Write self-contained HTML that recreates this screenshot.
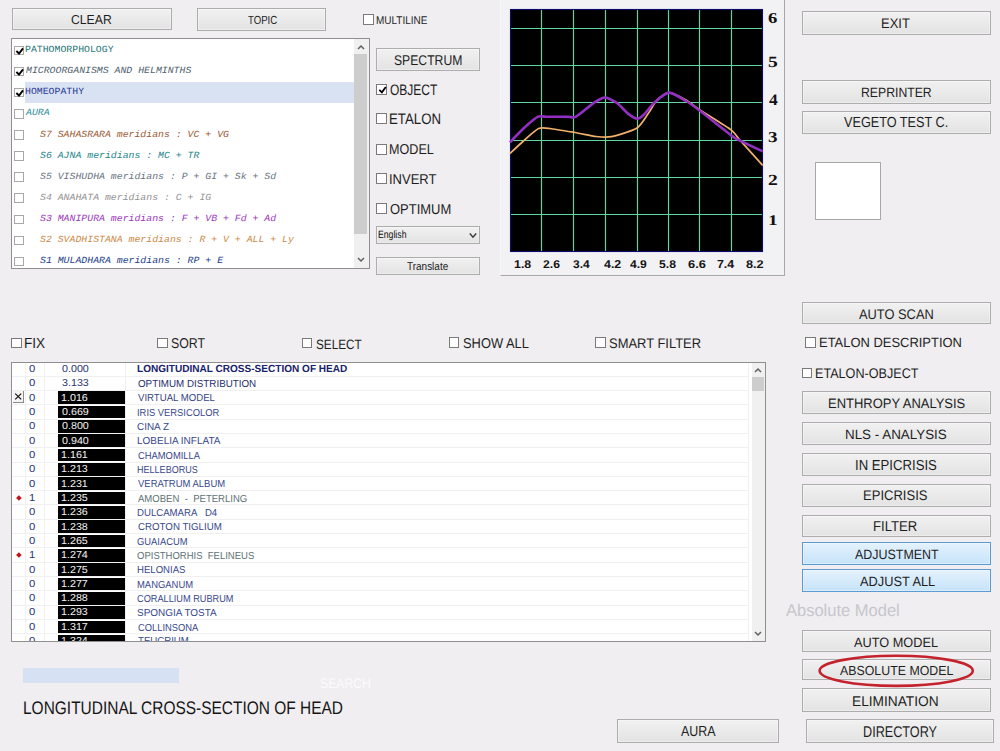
<!DOCTYPE html><html><head><meta charset="utf-8"><style>
html,body{margin:0;padding:0}
body{width:1000px;height:751px;background:#f0eef1;position:relative;overflow:hidden;font-family:"Liberation Sans",sans-serif;color:#1e1e1e;text-rendering:geometricPrecision}
.a{position:absolute;white-space:nowrap}
.t{position:absolute;white-space:nowrap;line-height:1;transform-origin:0 0}
.btn{position:absolute;box-sizing:border-box;border:1px solid #adadad;background:linear-gradient(#f1f1f1,#e3e3e3);box-shadow:inset 0 0 0 1px rgba(255,255,255,0.35)}
.btn.blue{border-color:#5b9bd2;background:linear-gradient(#e4f2fd,#c6e3f9)}
.cb{position:absolute;box-sizing:border-box;width:11px;height:11px;border:1px solid #7a7a7a;background:#fff}
</style></head><body>

<div class="btn" style="left:12px;top:8px;width:160.00px;height:22.40px;"></div>
<div class="t" style="left:71.14px;top:13.05px;font-size:13.03px;color:#1e1e1e;transform:scaleX(0.939);">CLEAR</div>
<div class="btn" style="left:197px;top:8px;width:129.00px;height:23.00px;"></div>
<div class="t" style="left:247.51px;top:14.63px;font-size:11.69px;color:#1e1e1e;transform:scaleX(0.821);">TOPIC</div>
<div class="cb" style="left:363px;top:14px;width:11.00px;height:11.00px;border-color:#7a7a7a"></div>
<div class="t" style="left:376.00px;top:15.92px;font-size:11.14px;color:#1e1e1e;transform:scaleX(0.896);">MULTILINE</div>
<div class="a" style="left:11px;top:38px;width:359px;height:231px;background:#fff"></div>
<div class="a" style="left:354px;top:39px;width:15px;height:229px;background:#f0f0f0"></div>
<div class="a" style="left:354.3px;top:54.2px;width:12.5px;height:180px;background:#cdcdcd"></div>
<svg class="a" style="left:355px;top:42px" width="12" height="10"><path d="M3 7 L6 4 L9 7" stroke="#606060" stroke-width="1.5" fill="none"/></svg>
<svg class="a" style="left:355px;top:255px" width="12" height="10"><path d="M3 3 L6 6 L9 3" stroke="#606060" stroke-width="1.5" fill="none"/></svg>
<div class="a" style="left:25px;top:82px;width:328.5px;height:20.5px;background:#d9e2f3"></div>
<div class="cb" style="left:14.3px;top:45.7px;width:9.50px;height:9.50px;border-color:#a8a8a8"><svg width="12" height="12" viewBox="0 0 12 12" style="position:absolute;left:-1px;top:-1px"><path d="M2.4 5.0 L5.0 7.5 L9.0 2.3" stroke="#000" stroke-width="1.9" fill="none"/></svg></div>
<div class="t" style="left:25.21px;top:45.15px;font-size:9.41px;color:#1f7676;font-family:'Liberation Mono';transform:scaleX(1.046);">PATHOMORPHOLOGY</div>
<div class="cb" style="left:14.3px;top:66.8px;width:9.50px;height:9.50px;border-color:#a8a8a8"><svg width="12" height="12" viewBox="0 0 12 12" style="position:absolute;left:-1px;top:-1px"><path d="M2.4 5.0 L5.0 7.5 L9.0 2.3" stroke="#000" stroke-width="1.9" fill="none"/></svg></div>
<div class="t" style="left:25.90px;top:66.25px;font-size:9.41px;color:#4f626e;font-family:'Liberation Mono';font-style:italic;transform:scaleX(1.046);">MICROORGANISMS AND HELMINTHS</div>
<div class="cb" style="left:14.3px;top:87.9px;width:9.50px;height:9.50px;border-color:#a8a8a8"><svg width="12" height="12" viewBox="0 0 12 12" style="position:absolute;left:-1px;top:-1px"><path d="M2.4 5.0 L5.0 7.5 L9.0 2.3" stroke="#000" stroke-width="1.9" fill="none"/></svg></div>
<div class="t" style="left:25.21px;top:87.35px;font-size:9.41px;color:#2a3a94;font-family:'Liberation Mono';transform:scaleX(1.046);">HOMEOPATHY</div>
<div class="cb" style="left:14.3px;top:109.00000000000001px;width:9.50px;height:9.50px;border-color:#a8a8a8"></div>
<div class="t" style="left:26.49px;top:108.45px;font-size:9.41px;color:#2f8f9a;font-family:'Liberation Mono';font-style:italic;transform:scaleX(1.046);">AURA</div>
<div class="cb" style="left:14.3px;top:130.1px;width:9.50px;height:9.50px;border-color:#a8a8a8"></div>
<div class="t" style="left:39.80px;top:129.55px;font-size:9.41px;color:#9a5a34;font-family:'Liberation Mono';font-style:italic;transform:scaleX(1.046);">S7 SAHASRARA meridians : VC + VG</div>
<div class="cb" style="left:14.3px;top:151.2px;width:9.50px;height:9.50px;border-color:#a8a8a8"></div>
<div class="t" style="left:39.80px;top:150.65px;font-size:9.41px;color:#25848c;font-family:'Liberation Mono';font-style:italic;transform:scaleX(1.046);">S6 AJNA meridians : MC + TR</div>
<div class="cb" style="left:14.3px;top:172.3px;width:9.50px;height:9.50px;border-color:#a8a8a8"></div>
<div class="t" style="left:39.80px;top:171.75px;font-size:9.41px;color:#68747f;font-family:'Liberation Mono';font-style:italic;transform:scaleX(1.046);">S5 VISHUDHA meridians : P + GI + Sk + Sd</div>
<div class="cb" style="left:14.3px;top:193.4px;width:9.50px;height:9.50px;border-color:#a8a8a8"></div>
<div class="t" style="left:39.80px;top:192.85px;font-size:9.41px;color:#939393;font-family:'Liberation Mono';font-style:italic;transform:scaleX(1.046);">S4 ANAHATA meridians : C + IG</div>
<div class="cb" style="left:14.3px;top:214.5px;width:9.50px;height:9.50px;border-color:#a8a8a8"></div>
<div class="t" style="left:39.80px;top:213.95px;font-size:9.41px;color:#9a38bc;font-family:'Liberation Mono';font-style:italic;transform:scaleX(1.046);">S3 MANIPURA meridians : F + VB + Fd + Ad</div>
<div class="cb" style="left:14.3px;top:235.6px;width:9.50px;height:9.50px;border-color:#a8a8a8"></div>
<div class="t" style="left:39.80px;top:235.05px;font-size:9.41px;color:#cc8a48;font-family:'Liberation Mono';font-style:italic;transform:scaleX(1.046);">S2 SVADHISTANA meridians : R + V + ALL + Ly</div>
<div class="cb" style="left:14.3px;top:256.7px;width:9.50px;height:9.50px;border-color:#a8a8a8"></div>
<div class="t" style="left:39.80px;top:256.15px;font-size:9.41px;color:#22428a;font-family:'Liberation Mono';font-style:italic;transform:scaleX(1.046);">S1 MULADHARA meridians : RP + E</div>
<div class="a" style="left:11px;top:38px;width:359px;height:231px;box-sizing:border-box;border:1px solid #8f8f8f"></div>
<div class="btn" style="left:376px;top:48px;width:104.00px;height:23.00px;"></div>
<div class="t" style="left:393.89px;top:52.89px;font-size:14.08px;color:#1e1e1e;transform:scaleX(0.865);">SPECTRUM</div>
<div class="cb" style="left:375.5px;top:84.25px;width:11.00px;height:11.00px;border-color:#7a7a7a"><svg width="12" height="12" viewBox="0 0 12 12" style="position:absolute;left:-1px;top:-1px"><path d="M3.3 5.9 L5.9 8.3 L9.8 3.0" stroke="#000" stroke-width="1.8" fill="none"/></svg></div>
<div class="t" style="left:389.90px;top:82.88px;font-size:15.14px;color:#1e1e1e;transform:scaleX(0.794);">OBJECT</div>
<div class="cb" style="left:375.5px;top:113.3px;width:11.00px;height:11.00px;border-color:#7a7a7a"></div>
<div class="t" style="left:389.44px;top:112.33px;font-size:15.14px;color:#1e1e1e;transform:scaleX(0.876);">ETALON</div>
<div class="cb" style="left:375.5px;top:143.8px;width:11.00px;height:11.00px;border-color:#7a7a7a"></div>
<div class="t" style="left:389.19px;top:143.45px;font-size:14.37px;color:#1e1e1e;transform:scaleX(0.878);">MODEL</div>
<div class="cb" style="left:375.5px;top:173.2px;width:11.00px;height:11.00px;border-color:#7a7a7a"></div>
<div class="t" style="left:389.03px;top:172.81px;font-size:14.20px;color:#1e1e1e;transform:scaleX(0.915);">INVERT</div>
<div class="cb" style="left:375.5px;top:203.2px;width:11.00px;height:11.00px;border-color:#7a7a7a"></div>
<div class="t" style="left:389.55px;top:203.09px;font-size:14.37px;color:#1e1e1e;transform:scaleX(0.904);">OPTIMUM</div>
<div class="btn" style="left:375.6px;top:226.2px;width:104.40px;height:17.40px;border-color:#acacac"></div>
<div class="t" style="left:378.10px;top:229.52px;font-size:10.64px;color:#111;transform:scaleX(0.817);">English</div>
<svg class="a" style="left:466px;top:229px" width="12" height="12"><path d="M3.8 4.6 L7 8.2 L10.2 4.6" stroke="#3a3a3a" stroke-width="1.45" fill="none"/></svg>
<div class="btn" style="left:376px;top:257.2px;width:104.00px;height:18.00px;"></div>
<div class="t" style="left:407.00px;top:262.04px;font-size:11.35px;color:#222;transform:scaleX(0.879);">Translate</div>
<div class="a" style="left:500px;top:-1px;width:285px;height:277px;box-sizing:border-box;border:1px solid #a8a8a8;border-left-color:#f6f6f8;border-top:none;background:#f2f1f4"></div>
<svg class="a" style="left:500px;top:0px" width="270" height="260" viewBox="500 0 270 260"><rect x="510" y="9" width="253" height="243" fill="#000"/><line x1="541.5" y1="9" x2="541.5" y2="252" stroke="#60d99c" stroke-width="1.15"/><line x1="573.5" y1="9" x2="573.5" y2="252" stroke="#60d99c" stroke-width="1.15"/><line x1="605.5" y1="9" x2="605.5" y2="252" stroke="#60d99c" stroke-width="1.15"/><line x1="637.5" y1="9" x2="637.5" y2="252" stroke="#60d99c" stroke-width="1.15"/><line x1="668.5" y1="9" x2="668.5" y2="252" stroke="#60d99c" stroke-width="1.15"/><line x1="699.5" y1="9" x2="699.5" y2="252" stroke="#60d99c" stroke-width="1.15"/><line x1="731.5" y1="9" x2="731.5" y2="252" stroke="#60d99c" stroke-width="1.15"/><line x1="510" y1="28.5" x2="763" y2="28.5" stroke="#60d99c" stroke-width="1.15"/><line x1="510" y1="65.5" x2="763" y2="65.5" stroke="#60d99c" stroke-width="1.15"/><line x1="510" y1="102.5" x2="763" y2="102.5" stroke="#60d99c" stroke-width="1.15"/><line x1="510" y1="140.5" x2="763" y2="140.5" stroke="#60d99c" stroke-width="1.15"/><line x1="510" y1="177.5" x2="763" y2="177.5" stroke="#60d99c" stroke-width="1.15"/><line x1="510" y1="214.5" x2="763" y2="214.5" stroke="#60d99c" stroke-width="1.15"/><rect x="510.5" y="9.5" width="252" height="242" stroke="#0c0c70" stroke-width="1.1" fill="none"/><path d="M510.0 153.5 C511.6 152.0 520.7 143.4 524.0 140.5 C527.3 137.6 535.6 130.0 538.6 128.6 C541.6 127.2 545.8 128.0 550.0 128.5 C554.2 129.0 569.6 131.6 575.0 132.5 C580.4 133.4 591.8 136.0 596.0 136.5 C600.2 137.0 606.7 137.7 611.4 136.7 C616.1 135.7 632.3 131.0 636.6 128.3 C640.9 125.6 645.8 116.9 648.2 113.6 C650.6 110.3 654.6 102.5 657.0 100.0 C659.4 97.5 665.6 92.6 669.0 92.6 C672.4 92.6 682.4 98.0 686.0 100.0 C689.6 102.0 694.8 106.5 700.0 110.0 C705.2 113.5 726.1 126.1 730.8 129.7 C735.5 133.3 736.9 136.7 740.6 140.9 C744.3 145.1 760.1 162.5 762.7 165.4" stroke="#f2b06a" stroke-width="1.7" fill="none"/><path d="M510.0 142.3 C511.6 140.6 520.7 131.0 524.0 128.0 C527.3 125.0 535.4 118.0 538.0 116.7 C540.6 115.4 542.5 116.7 546.0 116.7 C549.5 116.7 564.5 116.7 568.0 116.7 C571.5 116.7 572.9 118.4 576.0 116.7 C579.1 115.0 591.2 104.6 594.6 102.4 C598.0 100.2 602.4 97.4 605.0 97.5 C607.6 97.6 614.3 101.1 617.0 103.0 C619.7 104.9 625.6 111.8 628.0 113.6 C630.4 115.4 635.4 118.7 637.3 118.8 C639.2 118.9 642.0 116.4 644.0 114.5 C646.0 112.6 651.6 105.0 654.5 102.4 C657.4 99.8 665.3 92.8 669.0 92.6 C672.7 92.4 682.4 98.9 686.0 101.0 C689.6 103.1 694.6 106.7 700.0 110.8 C705.4 114.9 727.3 132.5 732.0 136.0 C736.7 139.5 737.0 139.1 740.6 140.9 C744.2 142.7 760.1 150.2 762.7 151.4" stroke="#9330c4" stroke-width="2.6" fill="none" stroke-linejoin="round"/></svg>
<div class="t" style="left:767.90px;top:10.66px;font-size:15.22px;color:#111;font-family:'Liberation Serif';font-weight:700;transform:scaleX(1.224);">6</div>
<div class="t" style="left:768.32px;top:55.48px;font-size:15.76px;color:#111;font-family:'Liberation Serif';font-weight:700;transform:scaleX(1.239);">5</div>
<div class="t" style="left:768.93px;top:93.03px;font-size:16.15px;color:#111;font-family:'Liberation Serif';font-weight:700;transform:scaleX(1.080);">4</div>
<div class="t" style="left:768.34px;top:129.98px;font-size:15.22px;color:#111;font-family:'Liberation Serif';font-weight:700;transform:scaleX(1.253);">3</div>
<div class="t" style="left:768.32px;top:172.74px;font-size:15.45px;color:#111;font-family:'Liberation Serif';font-weight:700;transform:scaleX(1.263);">2</div>
<div class="t" style="left:768.04px;top:213.80px;font-size:14.70px;color:#111;font-family:'Liberation Serif';font-weight:700;transform:scaleX(1.324);">1</div>
<div class="t" style="left:514.06px;top:260.09px;font-size:11.27px;color:#151515;font-weight:700;transform:scaleX(1.099);">1.8</div>
<div class="t" style="left:543.13px;top:260.09px;font-size:11.27px;color:#151515;font-weight:700;transform:scaleX(1.082);">2.6</div>
<div class="t" style="left:573.00px;top:260.09px;font-size:11.27px;color:#151515;font-weight:700;transform:scaleX(1.062);">3.4</div>
<div class="t" style="left:604.45px;top:260.07px;font-size:11.43px;color:#151515;font-weight:700;transform:scaleX(1.086);">4.2</div>
<div class="t" style="left:630.16px;top:260.09px;font-size:11.27px;color:#151515;font-weight:700;transform:scaleX(1.074);">4.9</div>
<div class="t" style="left:658.63px;top:260.09px;font-size:11.27px;color:#151515;font-weight:700;transform:scaleX(1.081);">5.8</div>
<div class="t" style="left:687.69px;top:260.09px;font-size:11.27px;color:#151515;font-weight:700;transform:scaleX(1.138);">6.6</div>
<div class="t" style="left:716.81px;top:259.92px;font-size:11.59px;color:#151515;font-weight:700;transform:scaleX(1.067);">7.4</div>
<div class="t" style="left:745.62px;top:260.09px;font-size:11.27px;color:#151515;font-weight:700;transform:scaleX(1.130);">8.2</div>
<div class="btn " style="left:802px;top:11px;width:189.00px;height:24.00px;"></div>
<div class="t" style="left:880.66px;top:17.30px;font-size:13.77px;color:#1e1e1e;transform:scaleX(0.942);">EXIT</div>
<div class="btn " style="left:802px;top:80px;width:189.00px;height:24.00px;"></div>
<div class="t" style="left:860.62px;top:86.06px;font-size:13.62px;color:#1e1e1e;transform:scaleX(0.899);">REPRINTER</div>
<div class="btn " style="left:802px;top:111px;width:189.00px;height:23.00px;"></div>
<div class="t" style="left:844.37px;top:116.30px;font-size:14.65px;color:#1e1e1e;transform:scaleX(0.865);">VEGETO TEST C.</div>
<div class="btn " style="left:802px;top:301.8px;width:189.00px;height:22.00px;"></div>
<div class="t" style="left:859.40px;top:307.57px;font-size:13.94px;color:#1e1e1e;transform:scaleX(0.922);">AUTO SCAN</div>
<div class="btn " style="left:802px;top:391.2px;width:189.00px;height:22.80px;"></div>
<div class="t" style="left:827.66px;top:397.35px;font-size:13.66px;color:#1e1e1e;transform:scaleX(0.950);">ENTHROPY ANALYSIS</div>
<div class="btn " style="left:802px;top:422.4px;width:189.00px;height:22.20px;"></div>
<div class="t" style="left:844.73px;top:427.93px;font-size:13.52px;color:#1e1e1e;transform:scaleX(0.991);">NLS - ANALYSIS</div>
<div class="btn " style="left:802px;top:453.4px;width:189.00px;height:22.20px;"></div>
<div class="t" style="left:854.92px;top:458.88px;font-size:14.51px;color:#1e1e1e;transform:scaleX(0.907);">IN EPICRISIS</div>
<div class="btn " style="left:802px;top:483.5px;width:189.00px;height:23.00px;"></div>
<div class="t" style="left:863.36px;top:489.03px;font-size:13.94px;color:#1e1e1e;transform:scaleX(0.936);">EPICRISIS</div>
<div class="btn " style="left:802px;top:514.5px;width:189.00px;height:22.00px;"></div>
<div class="t" style="left:872.95px;top:519.82px;font-size:14.35px;color:#1e1e1e;transform:scaleX(0.916);">FILTER</div>
<div class="btn blue" style="left:802px;top:542.4px;width:189.00px;height:22.20px;"></div>
<div class="t" style="left:855.00px;top:547.93px;font-size:13.52px;color:#1e1e1e;transform:scaleX(0.921);">ADJUSTMENT</div>
<div class="btn blue" style="left:802px;top:569.2px;width:189.00px;height:23.30px;"></div>
<div class="t" style="left:859.60px;top:574.97px;font-size:13.52px;color:#1e1e1e;transform:scaleX(0.947);">ADJUST ALL</div>
<div class="btn " style="left:802px;top:630.4px;width:189.00px;height:22.00px;"></div>
<div class="t" style="left:854.00px;top:635.93px;font-size:13.52px;color:#1e1e1e;transform:scaleX(0.943);">AUTO MODEL</div>
<div class="btn " style="left:802px;top:658.5px;width:189.00px;height:21.90px;"></div>
<div class="t" style="left:840.00px;top:663.61px;font-size:13.24px;color:#1e1e1e;transform:scaleX(0.934);">ABSOLUTE MODEL</div>
<div class="btn " style="left:802px;top:688.4px;width:189.00px;height:23.60px;"></div>
<div class="t" style="left:851.94px;top:693.89px;font-size:14.08px;color:#1e1e1e;transform:scaleX(0.974);">ELIMINATION</div>
<div class="a" style="left:815px;top:162px;width:66.00px;height:57.50px;border:1px solid #a8a8a8;box-sizing:border-box;background:#fff"></div>
<div class="cb" style="left:805px;top:337.3px;width:10.80px;height:10.50px;border-color:#7a7a7a"></div>
<div class="t" style="left:818.76px;top:336.19px;font-size:13.38px;color:#1e1e1e;transform:scaleX(0.968);">ETALON DESCRIPTION</div>
<div class="cb" style="left:801.5px;top:367.5px;width:10.30px;height:10.80px;border-color:#7a7a7a"></div>
<div class="t" style="left:815.19px;top:367.39px;font-size:13.94px;color:#1e1e1e;transform:scaleX(0.905);">ETALON-OBJECT</div>
<div class="t" style="left:785.60px;top:601.96px;font-size:17.03px;color:#c6c6cc;transform:scaleX(0.970);">Absolute Model</div>
<svg class="a" style="left:810px;top:648px" width="175" height="46"><ellipse cx="86.2" cy="22.8" rx="76.6" ry="15.1" stroke="#c4222c" stroke-width="2.6" fill="none"/></svg>
<div class="btn" style="left:806.4px;top:719.4px;width:188.00px;height:24.00px;"></div>
<div class="t" style="left:862.59px;top:725.28px;font-size:15.49px;color:#1e1e1e;transform:scaleX(0.817);">DIRECTORY</div>
<div class="btn" style="left:617.4px;top:719px;width:161.20px;height:24.00px;"></div>
<div class="t" style="left:681.00px;top:725.27px;font-size:14.57px;color:#1e1e1e;transform:scaleX(0.854);">AURA</div>
<div class="cb" style="left:11.3px;top:337.5px;width:10.80px;height:10.80px;border-color:#7a7a7a"></div>
<div class="t" style="left:24.11px;top:336.86px;font-size:14.64px;color:#1e1e1e;transform:scaleX(0.928);">FIX</div>
<div class="cb" style="left:157.2px;top:337.5px;width:10.80px;height:10.80px;border-color:#7a7a7a"></div>
<div class="t" style="left:171.38px;top:337.07px;font-size:14.23px;color:#1e1e1e;transform:scaleX(0.868);">SORT</div>
<div class="cb" style="left:302.2px;top:338.2px;width:10.30px;height:10.30px;border-color:#7a7a7a"></div>
<div class="t" style="left:316.01px;top:337.93px;font-size:13.52px;color:#1e1e1e;transform:scaleX(0.869);">SELECT</div>
<div class="cb" style="left:449px;top:337px;width:10.40px;height:10.80px;border-color:#7a7a7a"></div>
<div class="t" style="left:462.84px;top:337.07px;font-size:14.23px;color:#1e1e1e;transform:scaleX(0.906);">SHOW ALL</div>
<div class="cb" style="left:595.3px;top:337.2px;width:10.90px;height:10.70px;border-color:#7a7a7a"></div>
<div class="t" style="left:609.15px;top:336.67px;font-size:13.94px;color:#1e1e1e;transform:scaleX(0.929);">SMART FILTER</div>
<div class="a" style="left:11px;top:361.5px;width:755px;height:280.0px;background:#fff"></div>
<div class="a" style="left:12px;top:376px;width:737px;height:1px;background:#f0f0f0"></div><div class="a" style="left:12px;top:390px;width:737px;height:1px;background:#f0f0f0"></div><div class="a" style="left:12px;top:404px;width:737px;height:1px;background:#f0f0f0"></div><div class="a" style="left:58px;top:391.26px;width:67px;height:12.73px;background:#000"></div><div class="a" style="left:13.4px;top:391.16px;width:11px;height:11.4px;box-sizing:border-box;border-right:1.5px solid #8a8a8a;border-bottom:1.5px solid #8a8a8a;background:#f4f4f4"></div><svg class="a" style="left:13.4px;top:391.16px" width="11" height="11"><path d="M2.2 2.6 L8.2 8.4 M8.2 2.6 L2.2 8.4" stroke="#111" stroke-width="1.2"/></svg><div class="a" style="left:12px;top:419px;width:737px;height:1px;background:#f0f0f0"></div><div class="a" style="left:58px;top:405.59px;width:67px;height:12.73px;background:#000"></div><div class="a" style="left:12px;top:433px;width:737px;height:1px;background:#f0f0f0"></div><div class="a" style="left:58px;top:419.92px;width:67px;height:12.73px;background:#000"></div><div class="a" style="left:12px;top:447px;width:737px;height:1px;background:#f0f0f0"></div><div class="a" style="left:58px;top:434.25px;width:67px;height:12.73px;background:#000"></div><div class="a" style="left:12px;top:462px;width:737px;height:1px;background:#f0f0f0"></div><div class="a" style="left:58px;top:448.58px;width:67px;height:12.73px;background:#000"></div><div class="a" style="left:12px;top:476px;width:737px;height:1px;background:#f0f0f0"></div><div class="a" style="left:58px;top:462.91px;width:67px;height:12.73px;background:#000"></div><div class="a" style="left:12px;top:490px;width:737px;height:1px;background:#f0f0f0"></div><div class="a" style="left:58px;top:477.24px;width:67px;height:12.73px;background:#000"></div><div class="a" style="left:12px;top:504px;width:737px;height:1px;background:#f0f0f0"></div><div class="a" style="left:58px;top:491.57px;width:67px;height:12.73px;background:#000"></div><div class="a" style="left:16.9px;top:495.67px;width:3.8px;height:3.8px;background:#c01818;transform:rotate(45deg)"></div><div class="a" style="left:12px;top:519px;width:737px;height:1px;background:#f0f0f0"></div><div class="a" style="left:58px;top:505.90px;width:67px;height:12.73px;background:#000"></div><div class="a" style="left:12px;top:533px;width:737px;height:1px;background:#f0f0f0"></div><div class="a" style="left:58px;top:520.23px;width:67px;height:12.73px;background:#000"></div><div class="a" style="left:12px;top:547px;width:737px;height:1px;background:#f0f0f0"></div><div class="a" style="left:58px;top:534.56px;width:67px;height:12.73px;background:#000"></div><div class="a" style="left:12px;top:562px;width:737px;height:1px;background:#f0f0f0"></div><div class="a" style="left:58px;top:548.89px;width:67px;height:12.73px;background:#000"></div><div class="a" style="left:16.9px;top:552.99px;width:3.8px;height:3.8px;background:#c01818;transform:rotate(45deg)"></div><div class="a" style="left:12px;top:576px;width:737px;height:1px;background:#f0f0f0"></div><div class="a" style="left:58px;top:563.22px;width:67px;height:12.73px;background:#000"></div><div class="a" style="left:12px;top:590px;width:737px;height:1px;background:#f0f0f0"></div><div class="a" style="left:58px;top:577.55px;width:67px;height:12.73px;background:#000"></div><div class="a" style="left:12px;top:605px;width:737px;height:1px;background:#f0f0f0"></div><div class="a" style="left:58px;top:591.88px;width:67px;height:12.73px;background:#000"></div><div class="a" style="left:12px;top:619px;width:737px;height:1px;background:#f0f0f0"></div><div class="a" style="left:58px;top:606.21px;width:67px;height:12.73px;background:#000"></div><div class="a" style="left:12px;top:633px;width:737px;height:1px;background:#f0f0f0"></div><div class="a" style="left:58px;top:620.54px;width:67px;height:12.73px;background:#000"></div><div class="a" style="left:12px;top:648px;width:737px;height:1px;background:#f0f0f0"></div><div class="a" style="left:58px;top:634.87px;width:67px;height:12.73px;background:#000"></div><div class="a" style="left:25px;top:362px;width:1px;height:279px;background:#f0f0f0"></div><div class="a" style="left:44px;top:362px;width:1px;height:279px;background:#f0f0f0"></div><div class="a" style="left:125px;top:362px;width:1px;height:279px;background:#f0f0f0"></div><div class="a" style="left:748px;top:362px;width:1px;height:279px;background:#f0f0f0"></div>
<div class="t" style="left:61.77px;top:364.88px;font-size:10.14px;color:#2a3470;transform:scaleX(1.059);">0.000</div>
<div class="t" style="left:29.35px;top:364.88px;font-size:10.14px;color:#2a3470;transform:scaleX(1.109);">0</div>
<div class="t" style="left:137.10px;top:364.74px;font-size:10.28px;color:#18226a;font-weight:700;transform:scaleX(0.979);">LONGITUDINAL CROSS-SECTION OF HEAD</div>
<div class="t" style="left:61.77px;top:379.21px;font-size:10.14px;color:#2a3470;transform:scaleX(1.059);">3.133</div>
<div class="t" style="left:29.35px;top:379.21px;font-size:10.14px;color:#2a3470;transform:scaleX(1.109);">0</div>
<div class="t" style="left:137.95px;top:380.03px;font-size:10.14px;color:#28306c;transform:scaleX(0.968);">OPTIMUM DISTRIBUTION</div>
<div class="t" style="left:61.34px;top:393.54px;font-size:10.14px;color:#f4f4f4;transform:scaleX(1.059);">1.016</div>
<div class="t" style="left:29.35px;top:393.54px;font-size:10.14px;color:#2a3470;transform:scaleX(1.109);">0</div>
<div class="t" style="left:137.70px;top:393.83px;font-size:10.14px;color:#3a4684;transform:scaleX(0.950);">VIRTUAL MODEL</div>
<div class="t" style="left:61.77px;top:407.87px;font-size:10.14px;color:#f4f4f4;transform:scaleX(1.059);">0.669</div>
<div class="t" style="left:29.35px;top:407.87px;font-size:10.14px;color:#2a3470;transform:scaleX(1.109);">0</div>
<div class="t" style="left:136.96px;top:408.97px;font-size:10.14px;color:#3a4a8c;transform:scaleX(0.926);">IRIS VERSICOLOR</div>
<div class="t" style="left:61.77px;top:422.20px;font-size:10.14px;color:#f4f4f4;transform:scaleX(1.059);">0.800</div>
<div class="t" style="left:29.35px;top:422.20px;font-size:10.14px;color:#2a3470;transform:scaleX(1.109);">0</div>
<div class="t" style="left:137.30px;top:423.02px;font-size:10.14px;color:#3a4a8c;transform:scaleX(0.980);">CINA Z</div>
<div class="t" style="left:61.77px;top:436.53px;font-size:10.14px;color:#f4f4f4;transform:scaleX(1.059);">0.940</div>
<div class="t" style="left:29.35px;top:436.53px;font-size:10.14px;color:#2a3470;transform:scaleX(1.109);">0</div>
<div class="t" style="left:137.00px;top:436.81px;font-size:10.14px;color:#3a4a8c;transform:scaleX(0.986);">LOBELIA INFLATA</div>
<div class="t" style="left:61.34px;top:450.86px;font-size:10.14px;color:#f4f4f4;transform:scaleX(1.059);">1.161</div>
<div class="t" style="left:29.35px;top:450.86px;font-size:10.14px;color:#2a3470;transform:scaleX(1.109);">0</div>
<div class="t" style="left:137.81px;top:451.94px;font-size:10.14px;color:#3a4a8c;transform:scaleX(0.926);">CHAMOMILLA</div>
<div class="t" style="left:61.34px;top:465.19px;font-size:10.14px;color:#f4f4f4;transform:scaleX(1.059);">1.213</div>
<div class="t" style="left:29.35px;top:465.19px;font-size:10.14px;color:#2a3470;transform:scaleX(1.109);">0</div>
<div class="t" style="left:137.08px;top:466.00px;font-size:10.14px;color:#3a4a8c;transform:scaleX(0.893);">HELLEBORUS</div>
<div class="t" style="left:61.34px;top:479.52px;font-size:10.14px;color:#f4f4f4;transform:scaleX(1.059);">1.231</div>
<div class="t" style="left:29.35px;top:479.52px;font-size:10.14px;color:#2a3470;transform:scaleX(1.109);">0</div>
<div class="t" style="left:137.71px;top:479.66px;font-size:10.29px;color:#3a4a8c;transform:scaleX(0.921);">VERATRUM ALBUM</div>
<div class="t" style="left:61.34px;top:493.85px;font-size:10.14px;color:#f4f4f4;transform:scaleX(1.059);">1.235</div>
<div class="t" style="left:28.90px;top:493.85px;font-size:10.14px;color:#2a3470;transform:scaleX(1.109);">1</div>
<div class="t" style="left:137.80px;top:494.93px;font-size:10.14px;color:#5e7476;transform:scaleX(0.943);">AMOBEN &nbsp;- &nbsp;PETERLING</div>
<div class="t" style="left:61.34px;top:508.18px;font-size:10.14px;color:#f4f4f4;transform:scaleX(1.059);">1.236</div>
<div class="t" style="left:29.35px;top:508.18px;font-size:10.14px;color:#2a3470;transform:scaleX(1.109);">0</div>
<div class="t" style="left:137.03px;top:508.98px;font-size:10.14px;color:#3a4a8c;transform:scaleX(0.950);">DULCAMARA &nbsp; D4</div>
<div class="t" style="left:61.34px;top:522.51px;font-size:10.14px;color:#f4f4f4;transform:scaleX(1.059);">1.238</div>
<div class="t" style="left:29.35px;top:522.51px;font-size:10.14px;color:#2a3470;transform:scaleX(1.109);">0</div>
<div class="t" style="left:137.83px;top:522.77px;font-size:10.14px;color:#3a4a8c;transform:scaleX(0.959);">CROTON TIGLIUM</div>
<div class="t" style="left:61.34px;top:536.84px;font-size:10.14px;color:#f4f4f4;transform:scaleX(1.059);">1.265</div>
<div class="t" style="left:29.35px;top:536.84px;font-size:10.14px;color:#2a3470;transform:scaleX(1.109);">0</div>
<div class="t" style="left:137.33px;top:537.90px;font-size:10.14px;color:#3a4a8c;transform:scaleX(0.926);">GUAIACUM</div>
<div class="t" style="left:61.34px;top:551.17px;font-size:10.14px;color:#f4f4f4;transform:scaleX(1.059);">1.274</div>
<div class="t" style="left:28.90px;top:551.17px;font-size:10.14px;color:#2a3470;transform:scaleX(1.109);">1</div>
<div class="t" style="left:137.32px;top:551.96px;font-size:10.14px;color:#5e7476;transform:scaleX(0.939);">OPISTHORHIS &nbsp;FELINEUS</div>
<div class="t" style="left:61.34px;top:565.50px;font-size:10.14px;color:#f4f4f4;transform:scaleX(1.059);">1.275</div>
<div class="t" style="left:29.35px;top:565.50px;font-size:10.14px;color:#2a3470;transform:scaleX(1.109);">0</div>
<div class="t" style="left:137.03px;top:565.76px;font-size:10.14px;color:#3a4a8c;transform:scaleX(0.946);">HELONIAS</div>
<div class="t" style="left:61.34px;top:579.83px;font-size:10.14px;color:#f4f4f4;transform:scaleX(1.059);">1.277</div>
<div class="t" style="left:29.35px;top:579.83px;font-size:10.14px;color:#2a3470;transform:scaleX(1.109);">0</div>
<div class="t" style="left:137.04px;top:580.87px;font-size:10.14px;color:#3a4a8c;transform:scaleX(0.932);">MANGANUM</div>
<div class="t" style="left:61.34px;top:594.16px;font-size:10.14px;color:#f4f4f4;transform:scaleX(1.059);">1.288</div>
<div class="t" style="left:29.35px;top:594.16px;font-size:10.14px;color:#2a3470;transform:scaleX(1.109);">0</div>
<div class="t" style="left:137.34px;top:594.94px;font-size:10.14px;color:#3a4a8c;transform:scaleX(0.907);">CORALLIUM RUBRUM</div>
<div class="t" style="left:61.34px;top:608.49px;font-size:10.14px;color:#f4f4f4;transform:scaleX(1.059);">1.293</div>
<div class="t" style="left:29.35px;top:608.49px;font-size:10.14px;color:#2a3470;transform:scaleX(1.109);">0</div>
<div class="t" style="left:137.30px;top:608.74px;font-size:10.14px;color:#3a4a8c;transform:scaleX(0.984);">SPONGIA TOSTA</div>
<div class="t" style="left:61.34px;top:622.82px;font-size:10.14px;color:#f4f4f4;transform:scaleX(1.059);">1.317</div>
<div class="t" style="left:29.35px;top:622.82px;font-size:10.14px;color:#2a3470;transform:scaleX(1.109);">0</div>
<div class="t" style="left:137.89px;top:623.84px;font-size:10.14px;color:#3a4a8c;transform:scaleX(0.923);">COLLINSONA</div>
<div class="t" style="left:61.34px;top:637.15px;font-size:10.14px;color:#f4f4f4;transform:scaleX(1.059);">1.324</div>
<div class="t" style="left:29.35px;top:637.15px;font-size:10.14px;color:#2a3470;transform:scaleX(1.109);">0</div>
<div class="t" style="left:137.61px;top:637.15px;font-size:10.14px;color:#3a4a8c;transform:scaleX(0.950);">TEUCRIUM</div>
<div class="a" style="left:752px;top:362.5px;width:13px;height:278px;background:#f0f0f0"></div>
<div class="a" style="left:752.2px;top:377.2px;width:11.6px;height:13.8px;background:#cdcdcd"></div>
<svg class="a" style="left:752px;top:365px" width="12" height="10"><path d="M3 7 L6 4 L9 7" stroke="#606060" stroke-width="1.5" fill="none"/></svg>
<svg class="a" style="left:752px;top:629px" width="12" height="10"><path d="M3 3 L6 6 L9 3" stroke="#606060" stroke-width="1.5" fill="none"/></svg>
<div class="a" style="left:0;top:641.5px;width:780px;height:20px;background:#f0eef1"></div>
<div class="a" style="left:11px;top:361.5px;width:755px;height:280.0px;box-sizing:border-box;border:1px solid #8f8f8f"></div>
<div class="a" style="left:22.9px;top:668px;width:156.2px;height:15.2px;background:#d6e2f3"></div>
<div class="t" style="left:320.19px;top:676.53px;font-size:13.80px;color:#fbfbfb;transform:scaleX(0.886);">SEARCH</div>
<div class="t" style="left:23.10px;top:698.77px;font-size:18.17px;color:#151515;transform:scaleX(0.852);">LONGITUDINAL CROSS-SECTION OF HEAD</div>
</body></html>
